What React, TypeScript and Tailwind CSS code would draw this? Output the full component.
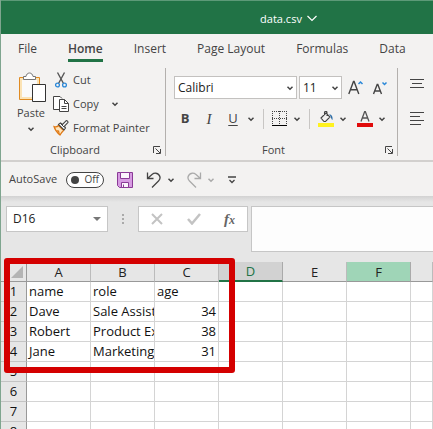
import type { ReactNode } from "react";

const tabs = ["File", "Home", "Insert", "Page Layout", "Formulas", "Data"];
const columns = ["A", "B", "C", "D", "E", "F", ""];
const rows: string[][] = [
  ["name", "role", "age"],
  ["Dave", "Sale Assist", "34"],
  ["Robert", "Product Ex", "38"],
  ["Jane", "Marketing", "31"],
  [],
  [],
  [],
  [],
];

function Chevron({ className = "" }: { className?: string }) {
  return (
    <svg className={`h-2 w-2 shrink-0 ${className}`} viewBox="0 0 8 8" fill="none" stroke="currentColor" strokeWidth="1.5" aria-hidden="true">
      <path d="M1.5 2.8 4 5.2 6.5 2.8" />
    </svg>
  );
}

function Launcher({ label }: { label: string }) {
  return (
    <button aria-label={label} className="flex w-4 shrink-0 justify-center">
      <svg className="h-2 w-2" viewBox="0 0 8 8" fill="none" stroke="currentColor" aria-hidden="true">
        <path d="M.5 7V.5H7M2.5 2.5l4.5 4.5M7.5 3v4.5H3" />
      </svg>
    </button>
  );
}

function Group({ name, className, children }: { name: string; className: string; children: ReactNode }) {
  return (
    <section aria-label={name} className={`flex shrink-0 flex-col border-r border-[#b3b0ad] ${className}`}>
      <div className="flex-1">{children}</div>
      <div className="flex h-3 items-center">
        <span className="flex-1 text-center text-[11px]">{name}</span>
        <Launcher label={`${name} settings`} />
      </div>
    </section>
  );
}

function PasteIcon() {
  return (
    <svg className="h-8 w-8" viewBox="0 0 32 32" fill="none" aria-hidden="true">
      <path d="M4.500 5.500h20v22h-20z" fill="#fbe3b5" stroke="#e08b22" />
      <path d="M7 8h15v17H7z" fill="#fafafa" />
      <path d="M8.500 7.500V4.500H11c.4-2 1.500-3.500 3.500-3.500S17.600 2.500 18 4.500h2.500v3z" fill="#fff" stroke="#777" />
      <path d="M17.500 12.500h13v17h-13z" fill="#fff" stroke="#333" />
    </svg>
  );
}

function CutIcon() {
  return (
    <svg className="h-4 w-4" viewBox="0 0 16 16" fill="none" aria-hidden="true">
      <path d="m4.500.5 6 11M11.500.5l-6 11" stroke="#555" strokeWidth="1.400" />
      <circle cx="4.500" cy="13" r="1.900" stroke="#2b88d8" strokeWidth="1.300" />
      <circle cx="11.500" cy="13" r="1.900" stroke="#2b88d8" strokeWidth="1.300" />
    </svg>
  );
}

function CopyIcon() {
  return (
    <svg className="h-4 w-4" viewBox="0 0 16 16" fill="#fff" stroke="#444" aria-hidden="true">
      <path d="M6 13.500H.5V.5H7l2 2" />
      <path d="M6.500 3.500h5l4 4v8h-9z" />
      <path d="M11.500 3.500v4h4M8.500 10.500h5M8.500 12.500h5" fill="none" />
    </svg>
  );
}

function BrushIcon() {
  return (
    <svg className="h-4 w-4" viewBox="0 0 16 16" fill="none" aria-hidden="true">
      <path d="M1 6.500c2 .6 3.500.2 4.500-1l5 5c-1 1-2.500 2.600-3.500 4.500C4.500 13 2 10 1 6.500z" fill="#fde5bf" stroke="#e07a16" strokeWidth="1.200" />
      <path d="m3 10 3 .500 1 4z" fill="#e07a16" />
      <path d="m5.500 4.500 2-1.500 2 1.500L13 .8c.8-.6 2.500 1 1.800 1.900L11.500 6l1 2-1.500 2z" fill="#fff" stroke="#444" strokeWidth="1.100" />
      <path d="m7.500 3.500 4 4" stroke="#444" />
    </svg>
  );
}

function BordersIcon() {
  return (
    <svg className="h-4 w-4" viewBox="0 0 16 16" fill="none" stroke="#444" aria-hidden="true">
      <path d="M0 .5h15M0 7.500h15M.5 0v13M7.500 0v13M14.500 0v13" strokeDasharray="1 1" />
      <path d="M0 14.500h15" stroke="#000" />
    </svg>
  );
}

function FillIcon() {
  return (
    <svg className="h-4 w-4" viewBox="0 0 16 16" fill="none" aria-hidden="true">
      <path d="m3 7 5-5 4 4-4.500 4.500H6zM6.500 4V1.500c0-1.500 2.500-1.500 2.500 0V5" stroke="#444" strokeWidth="1.100" />
      <path d="M11 3.500c2.500-.5 4 2 3.500 5.500-1-.5-1.500-2-2-4z" fill="#2b6da8" />
      <path d="M0 12h16v4H0z" fill="#fff21f" />
    </svg>
  );
}

function SaveIcon() {
  return (
    <svg className="h-4 w-4" viewBox="0 0 16 16" aria-hidden="true">
      <path d="M.5.5h15v15h-13l-2-2z" fill="#d79be2" stroke="#8a3a96" />
      <path d="M3.500.5h9v6h-9zM4.500 10.500h7v5h-7z" fill="#fbf4fc" stroke="#8a3a96" />
      <path d="M6.500 12.500v3" stroke="#8a3a96" />
    </svg>
  );
}

function UndoIcon({ flip = false }: { flip?: boolean }) {
  return (
    <svg className={`h-4 w-4 ${flip ? "-scale-x-100" : ""}`} viewBox="0 0 16 16" fill="none" stroke="currentColor" strokeWidth="1.300" aria-hidden="true">
      <path d="M1.500.5v6h6M1.800 6.200 6 2.500c2.500-2 5.500-1.500 7 .5s1 4.500-.500 6L6 15.500" />
    </svg>
  );
}

function LetterSize({ grow = false }: { grow?: boolean }) {
  return (
    <svg className="h-4 w-4" viewBox="0 0 16 16" fill="none" aria-hidden="true">
      {grow ? (
        <path d="m.8 14 4.700-12.500h.6L10.800 14M2.500 9.800h6.600" stroke="#444" strokeWidth="1.400" />
      ) : (
        <path d="m1.500 14 3.700-9.500h.6L9.500 14M2.900 11h5.200" stroke="#444" strokeWidth="1.400" />
      )}
      <path d={grow ? "m10.500 4 2-2 2 2" : "m10.500 2.500 2 2 2-2"} stroke="#2b88d8" strokeWidth="1.500" />
    </svg>
  );
}

function Ribbon() {
  return (
    <div className="flex h-[94px] shrink-0 overflow-hidden border-b-2 border-[#d2d0ce] pb-1">
      <Group name="Clipboard" className="w-[165px]">
        <div className="flex gap-1 pl-3">
          <button className="flex w-9 flex-col items-center pt-1 text-[11px] leading-4">
            <PasteIcon />
            <span className="pt-px">Paste</span>
            <Chevron className="mt-1" />
          </button>
          <div className="flex flex-col text-[11px]">
            <button className="flex h-6 items-center gap-1">
              <CutIcon />
              Cut
            </button>
            <button className="flex h-6 items-center gap-1">
              <CopyIcon />
              Copy
              <Chevron className="ml-2" />
            </button>
            <button className="flex h-6 items-center gap-1 whitespace-nowrap">
              <BrushIcon />
              Format Painter
            </button>
          </div>
        </div>
      </Group>
      <Group name="Font" className="w-[232px]">
        <div className="flex items-center gap-[2px] pt-2 pl-2">
          <label className="relative flex items-center">
            <select aria-label="Font" className="h-[23px] w-[123px] appearance-none border border-[#c3c1bf] bg-white pl-[3px] text-[12px] text-[#222]">
              <option>Calibri</option>
            </select>
            <Chevron className="pointer-events-none absolute right-[3px]" />
          </label>
          <label className="relative flex items-center">
            <select aria-label="Font size" className="h-[23px] w-[43px] appearance-none border border-[#c3c1bf] bg-white pl-[3px] text-[12px] text-[#222]">
              <option>11</option>
            </select>
            <Chevron className="pointer-events-none absolute right-[3px]" />
          </label>
          <div className="flex gap-2 pl-1">
            <button aria-label="Increase font size"><LetterSize grow /></button>
            <button aria-label="Decrease font size"><LetterSize /></button>
          </div>
        </div>
        <div className="mt-2 flex h-6 items-center pl-[11px] text-[13px]">
          <button className="w-4 font-bold">B</button>
          <button className="ml-2 w-4 font-['Liberation_Serif',serif] text-[15px] italic">I</button>
          <button className="ml-2 w-4 underline underline-offset-2">U</button>
          <button aria-label="Underline style" className="ml-[6px]"><Chevron /></button>
          <span className="mx-2 h-5 w-px bg-[#c8c6c4]" />
          <button aria-label="Borders"><BordersIcon /></button>
          <button aria-label="Border style" className="ml-[5px]"><Chevron /></button>
          <span className="mx-2 h-5 w-px bg-[#c8c6c4]" />
          <button aria-label="Fill color"><FillIcon /></button>
          <button aria-label="Fill color list" className="ml-[5px]"><Chevron /></button>
          <button aria-label="Font color" className="ml-[10px]">
            <svg className="h-4 w-4" viewBox="0 0 16 16" fill="none" aria-hidden="true">
              <path d="M4 10.500 7.700.5h.6l3.700 10M5.300 7h5.400" stroke="#555" strokeWidth="1.300" />
              <path d="M0 12h16v4H0z" fill="#e00b0b" />
            </svg>
          </button>
          <button aria-label="Font color list" className="ml-[5px]"><Chevron /></button>
        </div>
      </Group>
      <div className="flex shrink-0 flex-col items-start gap-4 pt-[10px] pl-3">
        <button aria-label="Top align">
          <svg className="h-4 w-[14px]" viewBox="0 0 14 16" stroke="#444" aria-hidden="true">
            <path d="M0 1.500h14M2 5.500h10M0 9.500h14" />
          </svg>
        </button>
        <button aria-label="Align left">
          <svg className="h-4 w-[14px]" viewBox="0 0 14 16" stroke="#444" aria-hidden="true">
            <path d="M0 2.500h14M0 6.500h10M0 10.500h14M0 14.500h11" />
          </svg>
        </button>
      </div>
    </div>
  );
}

function QuickAccess() {
  return (
    <div className="flex h-[34px] shrink-0 items-center pt-px pl-2 text-[#444]">
      <label className="flex items-center gap-[9px] text-[11px]">
        AutoSave
        <span className="flex h-4 w-[38px] items-center justify-between rounded-full border border-[#444] bg-white px-1 text-[10px]">
          <input type="checkbox" className="h-2 w-2 appearance-none rounded-full bg-[#444]" />
          Off
        </span>
      </label>
      <button aria-label="Save" className="ml-[13px]"><SaveIcon /></button>
      <button aria-label="Undo" className="ml-[13px]"><UndoIcon /></button>
      <button aria-label="Undo list" className="ml-[5px]"><Chevron /></button>
      <button aria-label="Redo" className="ml-[11px] text-[#aaa]"><UndoIcon flip /></button>
      <button aria-label="Redo list" className="ml-[5px] text-[#aaa]"><Chevron /></button>
      <button aria-label="Customize toolbar" className="ml-[13px]">
        <svg className="h-2 w-2" viewBox="0 0 8 8" fill="none" stroke="currentColor" aria-hidden="true">
          <path d="M0 1h8M1.500 4 4 6.500 6.500 4" strokeWidth="1.300" />
        </svg>
      </button>
    </div>
  );
}

function FormulaBar() {
  return (
    <div className="shrink-0 bg-[#e6e6e6]">
      <div className="h-[6px] bg-linear-to-b from-[#d2d2d2] to-[#e6e6e6]" />
      <div className="flex items-start pt-1 pl-[5px]">
        <div className="flex h-[26px] w-[102px] shrink-0 items-center justify-between border border-[#c6c6c6] bg-white pr-[6px] pl-[6px]">
          <input aria-label="Name box" defaultValue="D16" className="w-16 bg-transparent text-[12px] text-[#222] outline-none" />
          <svg className="h-1 w-2" viewBox="0 0 8 4" fill="#777" aria-hidden="true"><path d="M0 0h8L4 4z" /></svg>
        </div>
        <svg className="mx-[14px] mt-2 h-[10px] w-[2px] shrink-0" viewBox="0 0 2 10" fill="#aaa" aria-hidden="true">
          <path d="M0 0h2v2H0zM0 4h2v2H0zM0 8h2v2H0z" />
        </svg>
        <div className="flex h-[26px] w-[110px] shrink-0 items-center justify-between border border-[#c6c6c6] bg-white pr-3 pl-3">
          <button aria-label="Cancel">
            <svg className="h-3 w-3" viewBox="0 0 12 12" stroke="#c3c3c3" strokeWidth="2" aria-hidden="true"><path d="m1 1 10 10M11 1 1 11" /></svg>
          </button>
          <button aria-label="Enter">
            <svg className="h-3 w-[14px]" viewBox="0 0 14 12" fill="none" stroke="#c3c3c3" strokeWidth="2.500" aria-hidden="true"><path d="m1 6 4 4.500L13 1" /></svg>
          </button>
          <button aria-label="Insert function" className="font-['Liberation_Serif',serif] text-[15px] leading-4 font-bold text-[#666] italic">
            f<span className="text-[12px]">x</span>
          </button>
        </div>
        <textarea aria-label="Formula" className="ml-[3px] block h-[46px] min-w-0 flex-1 resize-none border border-r-0 border-[#c6c6c6] bg-[#fdfdfd] outline-none" />
      </div>
    </div>
  );
}

function headerStyle(column: string) {
  if (column === "D") return "border-b-2 border-b-[#217346] border-r-[#aaa] bg-[#d2d2d2] text-[#217346]";
  if (column === "F") return "border-b border-b-[#999] border-r-[#aaa] bg-[#9fd5b7] text-[#222]";
  return "border-b border-b-[#999] border-r-[#bbb] bg-[#e6e6e6] text-[#222]";
}

function Sheet() {
  return (
    <div className="relative shrink-0 bg-[#e6e6e6] pt-[10px]">
      <table className="w-full table-fixed border-separate border-spacing-0 text-[13px] text-[#111]">
        <colgroup>
          <col className="w-[26px]" />
          <col className="w-16" />
          <col className="w-16" />
          <col className="w-16" />
          <col className="w-16" />
          <col className="w-16" />
          <col className="w-16" />
          <col />
        </colgroup>
        <thead>
          <tr className="h-5">
            <th aria-label="Select all" className="border-r border-b border-[#999] p-0">
              <svg className="mr-[3px] ml-auto h-3 w-3" viewBox="0 0 12 12" fill="#b4b4b4" aria-hidden="true"><path d="M12 0v12H0z" /></svg>
            </th>
            {columns.map((column, i) => (
              <th key={i} scope="col" className={`border-r p-0 leading-[18px] font-normal ${headerStyle(column)}`}>
                {column}
              </th>
            ))}
          </tr>
        </thead>
        <tbody>
          {rows.map((row, r) => (
            <tr key={r} className="h-5">
              <th scope="row" className="border-r border-b border-r-[#999] border-b-[#c4c4c4] bg-[#e6e6e6] p-0 leading-[19px] font-normal">{r + 1}</th>
              {columns.map((_, c) => (
                <td
                  key={c}
                  className={`overflow-hidden border-r border-b border-[#d4d4d4] bg-white py-0 pr-[2px] pl-[2px] leading-[19px] whitespace-nowrap ${c === 2 && r > 0 ? "text-right" : ""}`}
                >
                  {row[c]}
                </td>
              ))}
            </tr>
          ))}
        </tbody>
      </table>
      <div className="absolute top-[6px] left-[3px] h-[115px] w-[231px] rounded-[3px] border-6 border-[#d40000]" />
    </div>
  );
}

export default function App() {
  return (
    <div className="flex h-screen flex-col overflow-hidden border-l border-[#7fa58f] bg-[#f3f2f1] font-['Open_Sans','Noto_Sans',sans-serif] text-[#444]">
      <header className="flex h-[34px] shrink-0 items-center justify-center border-t border-[#5d9a78] bg-[#217346] pt-[3px] pl-[144px] text-[11px] text-white">
        <button className="flex items-center gap-1">
          data.csv
          <svg className="h-3 w-3" viewBox="0 0 12 12" fill="none" stroke="currentColor" strokeWidth="1.200" aria-hidden="true"><path d="m1.500 3 4.500 4.500L10.500 3" /></svg>
        </button>
      </header>
      <nav aria-label="Ribbon tabs" className="flex h-[34px] shrink-0 items-start gap-[31px] overflow-hidden pt-[5px] pl-[17px] text-[12px] whitespace-nowrap">
        {tabs.map((tab) => (
          <button key={tab} className={`h-[23px] shrink-0 border-b-3 leading-5 ${tab === "Home" ? "border-[#217346] font-semibold" : "border-transparent"}`}>
            {tab}
          </button>
        ))}
      </nav>
      <Ribbon />
      <QuickAccess />
      <FormulaBar />
      <Sheet />
    </div>
  );
}
